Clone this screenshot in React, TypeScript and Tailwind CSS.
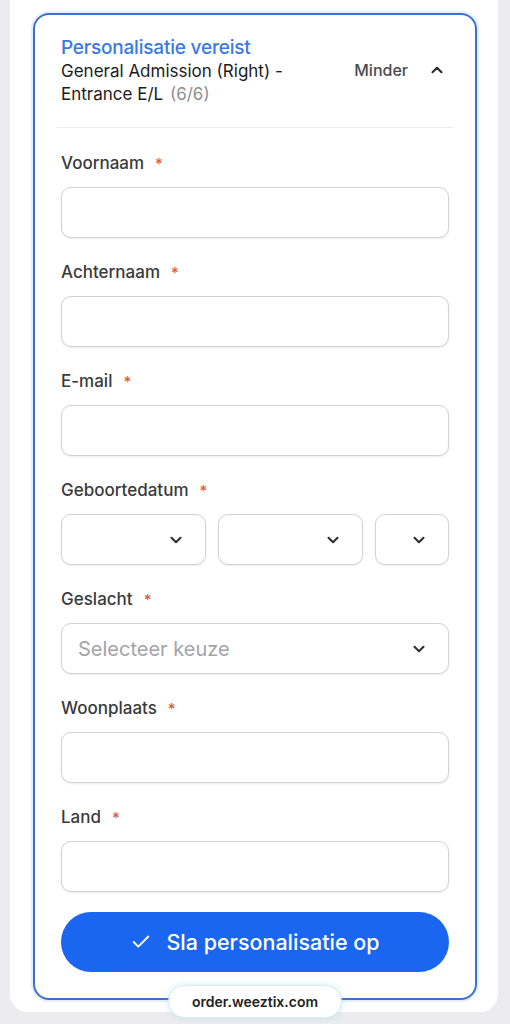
import { ChevronDown, ChevronUp, Check } from "lucide-react";

const Label = ({ text }: { text: string }) => (
    <div className="flex items-center h-6 pt-1 text-[17px] font-medium text-[#3a3a3c]">
        {text}
        <span className="ml-[11px] text-[#e2583a] text-[15px]">*</span>
    </div>
);

const Box = ({ className = "", children }: { className?: string; children?: React.ReactNode }) => (
    <div
        className={
            "h-[51px] rounded-[10px] border-[1.5px] border-[#d2d2d6] bg-white shadow-[0_1px_2px_rgba(0,0,0,0.08)] flex items-center " +
            className
        }
    >
        {children}
    </div>
);

const Field = ({ label, children }: { label: string; children?: React.ReactNode }) => (
    <div className="flex flex-col">
        <Label text={label} />
        <div className="mt-[13px]">{children ?? <Box />}</div>
    </div>
);

const SelectBox = ({ className = "", placeholder }: { className?: string; placeholder?: string }) => (
    <Box className={"justify-between pl-4 pr-[20px] " + className}>
        <span className="text-[20px] text-[#a3a3a8]">{placeholder}</span>
        <ChevronDown size={18} strokeWidth={2.8} className="text-[#2e2e33]" />
    </Box>
);

export default function App() {
    return (
        <div
            className="w-[510px] h-[1024px] overflow-hidden bg-[#ececee] relative"
            style={{ fontFamily: "Inter, 'Noto Sans', sans-serif" }}
        >
            <div className="ml-[10px] w-[488px] h-[1012px] bg-white rounded-b-[18px] pt-[13px] pl-[23px] pr-[21px]">
                <div className="border-2 border-[#3d6fd2] rounded-[16px] px-[26px] pt-[21px] pb-[26px] shadow-[0_0_0_2px_rgba(90,140,230,0.15)]">
                    <div className="flex justify-between items-start">
                        <div>
                            <div className="text-[19px] leading-6 font-medium text-[#3a7ae0] tracking-[-0.2px]">
                                Personalisatie vereist
                            </div>
                            <div className="text-[17px] leading-[23px] text-[#1c1c1e]">
                                General Admission (Right) -
                                <br />
                                Entrance E/L <span className="text-[#8e8e93] ml-0.5">(6/6)</span>
                            </div>
                        </div>
                        <div className="flex items-center mt-[22px] text-[16px] font-medium text-[#4a4a4e]">
                            Minder
                            <ChevronUp size={18} strokeWidth={2.8} className="ml-[20px] mr-[3px] text-[#2a2a2e]" />
                        </div>
                    </div>
                    <div className="h-px bg-[#ececee] -mx-1 mt-[21px]" />
                    <div className="flex flex-col gap-[21px] mt-[22px]">
                        <Field label="Voornaam" />
                        <Field label="Achternaam" />
                        <Field label="E-mail" />
                        <Field label="Geboortedatum">
                            <div className="flex gap-3">
                                <SelectBox className="w-[145px]" />
                                <SelectBox className="w-[145px]" />
                                <SelectBox className="w-[74px]" />
                            </div>
                        </Field>
                        <Field label="Geslacht">
                            <SelectBox placeholder="Selecteer keuze" />
                        </Field>
                        <Field label="Woonplaats" />
                        <Field label="Land" />
                    </div>
                    <button className="mt-[20px] w-full h-[60px] rounded-full bg-[#1a66f0] text-white flex items-center justify-center gap-[14px] text-[21.5px] font-medium">
                        <Check size={22} strokeWidth={2} />
                        Sla personalisatie op
                    </button>
                </div>
            </div>
            <div className="absolute left-[168px] top-[985px] w-[174px] h-[33px] rounded-full bg-white border border-[#d6eef4] shadow-[0_0_6px_rgba(120,200,220,0.35)] flex items-center justify-center text-[14px] font-semibold text-[#222]">
                order.weeztix.com
            </div>
        </div>
    );
}
